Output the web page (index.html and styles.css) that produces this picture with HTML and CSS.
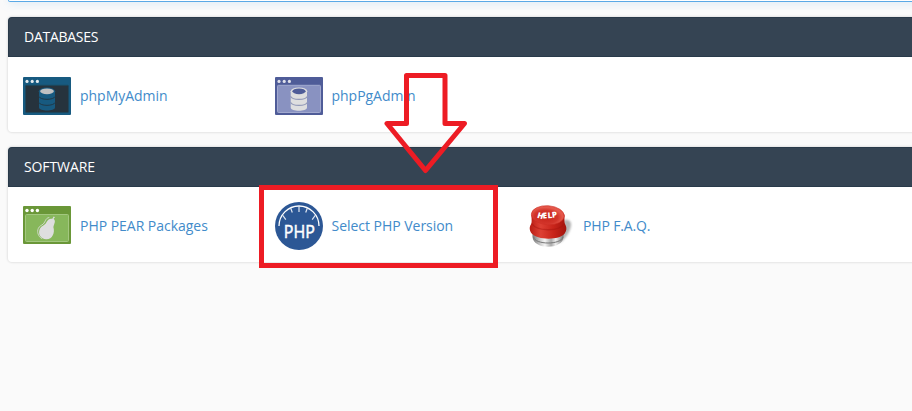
FILE: index.html
```html
<!DOCTYPE html>
<html lang="en">
<head>
<meta charset="utf-8">
<title>cPanel</title>
<link rel="stylesheet" href="styles.css">
</head>
<body>
<div class="prev-panel"></div>
<main class="panels">
  <section class="panel">
    <h2 class="panel-head">DATABASES</h2>
    <div class="panel-body">
      <a class="item" href="#">
        <svg class="icon" viewBox="0 0 48 48">
          <rect y="5" width="48" height="38" rx="1" fill="#175a80"/>
          <g fill="#e4e9ec"><circle cx="4" cy="9.4" r="1.6"/><circle cx="9.2" cy="9.4" r="1.6"/><circle cx="14.4" cy="9.4" r="1.6"/></g>
          <rect x="2.5" y="13.3" width="43" height="27.2" rx="1" fill="#26333d" stroke="#1c465c"/>
          <path d="M16 19v16.5c0 4 16 4 16 0V19z" fill="#175a80"/>
          <ellipse cx="24" cy="19.3" rx="8.2" ry="3.7" fill="#175a80"/>
          <ellipse cx="24" cy="19.3" rx="6.9" ry="2.9" fill="#c0c1c2"/>
          <path d="M15.5 24.2c2 4.2 15 4.2 17 0M15.5 30.2c2 4.2 15 4.2 17 0" fill="none" stroke="#203847" stroke-width="1"/>
        </svg>
        <span>phpMyAdmin</span>
      </a>
      <a class="item" href="#">
        <svg class="icon" viewBox="0 0 48 48">
          <rect y="5" width="48" height="38" rx="1" fill="#4f5c98"/>
          <g fill="#e0e1ea"><circle cx="4" cy="9.4" r="1.6"/><circle cx="9.2" cy="9.4" r="1.6"/><circle cx="14.4" cy="9.4" r="1.6"/></g>
          <rect x="2.5" y="13.3" width="43" height="27.2" rx="1" fill="#8992c1" stroke="#a2a9cf"/>
          <path d="M15.7 19v16.5c0 4.3 16.3 4.3 16.3 0V19z" fill="#dededf"/>
          <ellipse cx="24" cy="19.3" rx="8.3" ry="3.9" fill="#dededf"/>
          <ellipse cx="24" cy="19.3" rx="6.6" ry="2.9" fill="#4f5c98"/>
          <path d="M15.5 24.2c2 4.2 15 4.2 17 0M15.5 30.2c2 4.2 15 4.2 17 0" fill="none" stroke="#9299b8" stroke-width="1.1"/>
        </svg>
        <span>phpPgAdmin</span>
      </a>
    </div>
  </section>
  <section class="panel">
    <h2 class="panel-head tight">SOFTWARE</h2>
    <div class="panel-body">
      <a class="item" href="#">
        <svg class="icon" viewBox="0 0 48 48">
          <rect y="4" width="48" height="38" rx="1" fill="#6a9738"/>
          <g fill="#fff"><circle cx="4" cy="8.5" r="1.7"/><circle cx="9.2" cy="8.5" r="1.7"/><circle cx="14.4" cy="8.5" r="1.7"/></g>
          <rect x="2.5" y="12.5" width="43" height="27" rx="1" fill="#87b75b" stroke="#a3c77f"/>
          <path d="M32 15.2l-1.4 1.6c2.8 2.5.2 5.4-.2 8.4 1.8 5.6-1.2 12.3-7.2 12-5.6-.2-8.2-5-6.700-9.500 1.300-4 5-3.700 6.800-7.200 1.500-3 3.200-4.300 6-3.700l1.400-2.400z" fill="#dededf"/>
          <path d="M26.300 15.500c-4.600.5-3.500 5.500-7.500 7.500-4.500 2.200-5 7-3 10.500 1 1.700 2 2.600 3.300 3.200" fill="none" stroke="#dededf" stroke-width=".8"/>
        </svg>
        <span>PHP PEAR Packages</span>
      </a>
      <a class="item" href="#">
        <svg class="icon" viewBox="0 0 48 48">
          <circle cx="24" cy="24" r="24" fill="#2c5795"/>
          <path d="M4 24a20 20 0 0 1 40 0" fill="none" stroke="#fff" stroke-width="1.3"/>
          <path d="M24 4v6M15.5 5.8l1.8 4.700M32.500 5.800l-1.800 4.700M7.500 13l3.300 4.700M40.500 13l-3.300 4.700" fill="none" stroke="#dfe7f2" stroke-width="1.2"/>
          <text class="php" x="8.800" y="35.500" textLength="31" lengthAdjust="spacingAndGlyphs">PHP</text>
        </svg>
        <span>Select PHP Version</span>
      </a>
      <a class="item" href="#">
        <svg class="icon" viewBox="0 0 48 48">
          <defs>
            <linearGradient id="metal"><stop stop-color="#777"/><stop offset=".25" stop-color="#ccc"/><stop offset=".4" stop-color="#f4f4f4"/><stop offset=".6" stop-color="#aaa"/><stop offset=".75" stop-color="#eee"/><stop offset="1" stop-color="#777"/></linearGradient>
            <linearGradient id="side"><stop stop-color="#b81d14"/><stop offset=".3" stop-color="#dd4034"/><stop offset=".65" stop-color="#c8241a"/><stop offset="1" stop-color="#a3140d"/></linearGradient>
            <radialGradient id="top" cx=".45" cy=".6"><stop stop-color="#c62419"/><stop offset=".7" stop-color="#d2342a"/><stop offset="1" stop-color="#e4574a"/></radialGradient>
            <filter id="soft" x="-30%" y="-30%" width="160%" height="160%"><feGaussianBlur stdDeviation="1.1"/></filter>
          </defs>
          <path d="M37 18c5-1 8 2 7 6-1 6-5 12-11 17z" fill="#777" opacity=".55" filter="url(#soft)"/>
          <g transform="translate(0 1)">
            <path d="M5.500 29v5c1 13 30 13 31 0v-5z" fill="url(#metal)"/>
            <path d="M6.500 34c1.500 8 27.500 8 29.500 0" fill="none" stroke="#777" stroke-width="1"/>
            <path d="M4.500 12c0 6 .8 7.500-1.200 10.500-1 2-.8 5 .9 7.500 6 7.500 28 7.500 33.500.5 2-2.800 2.200-6 .8-8.500-1.400-2.500-1-5-1-10.500z" fill="url(#side)"/>
            <path d="M4.800 20.500c5 8 27 8.500 32.200.5" fill="none" stroke="#a3150e" stroke-width="1.300" opacity=".45"/>
            <ellipse cx="20.800" cy="12.200" rx="16.500" ry="9.500" transform="rotate(4 20.800 12.200)" fill="url(#top)" stroke="#cb2b20" stroke-width=".6"/>
            <text class="help" transform="translate(10 12.500) rotate(5)"><tspan x="0" y="2" rotate="12">H</tspan><tspan x="6" y="2.500" rotate="-8">E</tspan><tspan x="11" y="1.800" rotate="-8">L</tspan><tspan x="15.500" y=".8" rotate="-12">P</tspan></text>
          </g>
        </svg>
        <span>PHP F.A.Q.</span>
      </a>
    </div>
  </section>
</main>
<div class="highlight"></div>
<svg class="arrow" viewBox="0 0 84 104">
  <path d="M22.500 5.500H61V53.500H80.500L41.500 100.500L3 53.500H22.500Z" fill="none" stroke="#ed1c24" stroke-width="5" stroke-linejoin="round"/>
</svg>
</body>
</html>
```
FILE: styles.css
```css
* { box-sizing: border-box; }
body {
  margin: 0;
  height: 411px;
  overflow: hidden;
  background: #fafafa;
  font-family: "Open Sans", sans-serif;
  font-size: 14px;
  line-height: 20px;
}
.prev-panel {
  height: 2px;
  margin: 0 -8px 0 8px;
  background: #fff;
  border: 1px solid #5aa9e6;
  border-top: 0;
  border-radius: 0 0 0 4px;
  box-shadow: 0 0 8px rgba(102, 175, 233, .6);
}
.panels {
  display: flex;
  flex-direction: column;
  gap: 15px;
  padding: 15px 0 0 8px;
}
.panel {
  margin-right: -8px;
  background: #fff;
  border-radius: 4px;
  box-shadow: 0 0 2px 1px rgba(0, 0, 0, .09);
}
.panel-head {
  height: 40px;
  margin: 0;
  padding: 9px 15px;
  background: #354453;
  border: 1px solid #293a4a;
  border-right-width: 0;
  border-radius: 4px 0 0 0;
  color: #fff;
  font-size: 14px;
  font-weight: 400;
  letter-spacing: -.27px;
}
.tight { letter-spacing: -.1px; }
.panel-body {
  display: grid;
  grid-template-columns: 252px 252px 252px;
  height: 75px;
  padding: 15px;
}
.item {
  display: flex;
  align-items: center;
  gap: 9px;
  height: 48px;
  color: #428bca;
  letter-spacing: -.03px;
  text-decoration: none;
  white-space: nowrap;
}
.item + .item { gap: 8.5px; }
.item:nth-child(3) {
  gap: 8px;
  letter-spacing: -.15px;
}
.icon {
  width: 48px;
  height: 48px;
  flex: none;
}
.php {
  fill: #fff;
  font: 500 18px "Open Sans", sans-serif;
  letter-spacing: 0;
  stroke: #fff;
  stroke-width: .5px;
}
.help {
  fill: #fff;
  font: 800 8px "Open Sans", sans-serif;
  letter-spacing: 0;
}
.highlight {
  position: absolute;
  left: 259px;
  top: 185px;
  width: 239px;
  height: 83px;
  border: 5px solid #ed1c24;
}
.arrow {
  position: absolute;
  left: 384px;
  top: 70px;
  width: 84px;
  height: 104px;
}
```
